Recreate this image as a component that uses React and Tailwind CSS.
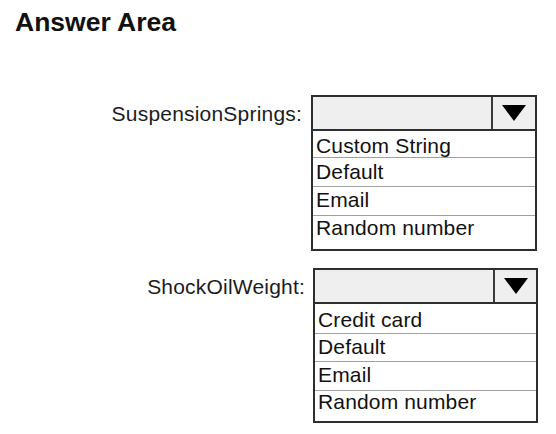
import React from 'react';

// Answer area with two dropdown mock-ups and their option lists
const sections = [
  {
    label: 'SuspensionSprings:',
    labelClass: 'w-[311px] pr-[9px]',
    boxClass: 'w-[226px]',
    arrowClass: 'w-[44px]',
    wrapClass: 'mt-[58px]',
    rows: [
      { text: 'Custom String', cls: 'h-[28px] pt-[5px] border-b border-[#a0a0a0]' },
      { text: 'Default', cls: 'h-[29px] pt-[3px] border-b border-[#a0a0a0]' },
      { text: 'Email', cls: 'h-[29px] pt-[2px] border-b border-[#a0a0a0]' },
      { text: 'Random number', cls: 'h-[33px] pt-[1px]' },
    ],
  },
  {
    label: 'ShockOilWeight:',
    labelClass: 'w-[313px] pr-[8px]',
    boxClass: 'w-[225px]',
    arrowClass: 'w-[43px]',
    wrapClass: 'mt-[17px]',
    rows: [
      { text: 'Credit card', cls: 'h-[31px] pt-[6px] border-b border-[#a0a0a0]' },
      { text: 'Default', cls: 'h-[28px] pt-[2px] border-b border-[#a0a0a0]' },
      { text: 'Email', cls: 'h-[29px] pt-[2px] border-b border-[#a0a0a0]' },
      { text: 'Random number', cls: 'h-[30px] pt-0' },
    ],
  },
];

const DropdownSection = ({ section }) => (
  <div className={`flex items-start ${section.wrapClass}`}>
    <div className={`${section.labelClass} h-[36px] flex items-center justify-end text-[21px] leading-[21px] tracking-[0.2px] text-[#1c1c1c]`}>
      {section.label}
    </div>
    <div className={section.boxClass}>
      {/* Closed select header */}
      <div className="flex h-[36px] border-2 border-[#2e2e2e] bg-[#efefef]">
        <div className="flex-1" />
        <div className={`${section.arrowClass} flex items-center justify-center border-l-2 border-[#3a3a3a]`}>
          <svg width="24" height="16" viewBox="0 0 24 16">
            <polygon points="0,0 24,0 12,16" fill="#000" />
          </svg>
        </div>
      </div>
      {/* Option list */}
      <div className="border-x-2 border-b-2 border-[#2e2e2e] -mt-[1px]">
        {section.rows.map((row) => (
          <div key={row.text} className={`${row.cls} pl-[3px] text-[21px] leading-[21px] tracking-[0.15px] text-[#111]`}>
            {row.text}
          </div>
        ))}
      </div>
    </div>
  </div>
);

const App = () => {
  return (
    <div className="w-[556px] h-[434px] bg-white overflow-hidden font-['Liberation_Sans',Arial,sans-serif]">
      <h1 className="pl-[15px] pt-[7px] text-[26.5px] leading-[30px] font-bold text-[#111]">
        Answer Area
      </h1>
      {sections.map((s) => (
        <DropdownSection key={s.label} section={s} />
      ))}
    </div>
  );
};

export default App;
